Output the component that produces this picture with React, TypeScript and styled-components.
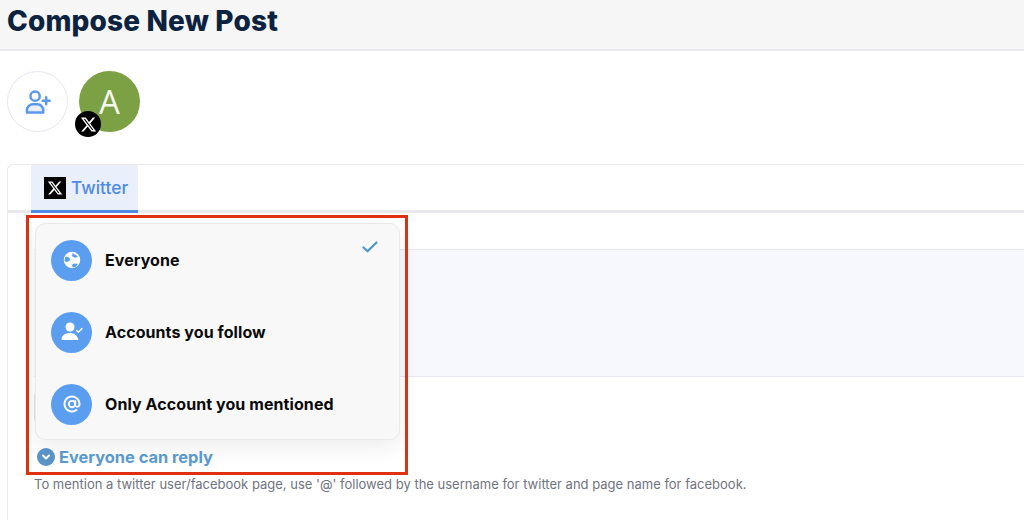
import React from "react";
import styled, { createGlobalStyle } from "styled-components";

const Global = createGlobalStyle`
  html, body { margin: 0; padding: 0; background: #fff; }
  body { width: 1024px; height: 520px; overflow: hidden; font-family: "Inter", "Liberation Sans", sans-serif; }
`;

const Page = styled.div`
  position: relative;
  width: 1024px;
  height: 520px;
  overflow: hidden;
  display: flex;
  flex-direction: column;
`;

const Header = styled.header`
  height: 51px;
  box-sizing: border-box;
  background: #f6f6f7;
  border-bottom: 2px solid #e9e9ef;
  padding: 5px 0 0 7px;
  flex: none;
`;

const Title = styled.h1`
  margin: 0;
  font-size: 28px;
  line-height: 32px;
  font-weight: 800;
  letter-spacing: 0.15px;
  color: #0c2340;
`;

const Accounts = styled.div`
  display: flex;
  gap: 11px;
  padding: 20px 0 0 7px;
  height: 113px;
  box-sizing: border-box;
  flex: none;
`;

const AddAccount = styled.div`
  width: 61px;
  height: 61px;
  box-sizing: border-box;
  border-radius: 50%;
  border: 1px solid #e6e7f0;
  display: flex;
  align-items: center;
  justify-content: center;
  color: #5b97ee;
`;

const Avatar = styled.div`
  position: relative;
  width: 61px;
  height: 61px;
  border-radius: 50%;
  background: #7ca145;
  color: #f4f7ee;
  font-size: 33px;
  font-family: "Open Sans", sans-serif;
  display: flex;
  align-items: center;
  justify-content: center;
`;

const NetworkBadge = styled.div`
  position: absolute;
  left: -4px;
  bottom: -5px;
  width: 26px;
  height: 26px;
  border-radius: 50%;
  background: #000;
  display: flex;
  align-items: center;
  justify-content: center;
`;

const Card = styled.section`
  position: relative;
  margin-left: 7px;
  flex: 1;
  border: 1px solid #e8e8ee;
  border-right: none;
  border-bottom: none;
  border-radius: 6px 0 0 0;
  box-sizing: border-box;
`;

const TabBar = styled.div`
  height: 48px;
  box-sizing: border-box;
  border-bottom: 3px solid #e9e9ed;
  padding-left: 23px;
  display: flex;
`;

const Tab = styled.div`
  height: 48px;
  box-sizing: border-box;
  padding: 0 10px 0 13px;
  background: #e9f0fc;
  border-bottom: 3px solid #4f8ae6;
  display: flex;
  align-items: center;
  gap: 5px;
  color: #4f8ae6;
  font-size: 17.4px;
  font-weight: 500;
`;

const XSquare = styled.div`
  width: 22px;
  height: 22px;
  background: #000;
  display: flex;
  align-items: center;
  justify-content: center;
`;

const Body = styled.div`
  padding: 36px 0 0 26px;
`;

const Editor = styled.div`
  height: 128px;
  box-sizing: border-box;
  background: #f6f8fd;
  border-top: 1px solid #e6e7ee;
  border-bottom: 1px solid #e6e7ee;
`;

const AttachButton = styled.div`
  width: 30px;
  height: 30px;
  margin-top: 14px;
  border: 1px solid #e4e4ea;
  border-radius: 4px;
`;

const ReplyRow = styled.div`
  display: flex;
  align-items: center;
  gap: 4px;
  margin: 24px 0 0 3px;
  color: #5b9bd0;
  font-size: 16.4px;
  line-height: 20px;
  font-weight: 700;
`;

const ReplyChevron = styled.span`
  width: 18px;
  height: 18px;
  border-radius: 50%;
  background: #5a95c8;
  display: flex;
  align-items: center;
  justify-content: center;
`;

const Hint = styled.p`
  margin: 8px 0 0;
  color: #6f7480;
  font-size: 13px;
  line-height: 18px;
`;

const Menu = styled.div`
  position: absolute;
  left: 27px;
  top: 58px;
  width: 365px;
  height: 217px;
  box-sizing: border-box;
  padding: 15px 15px 14px;
  border: 1px solid #e9e9ec;
  border-radius: 10px;
  background: #f8f8f9;
  box-shadow: 0 8px 22px rgba(0, 0, 0, 0.07);
  display: flex;
  flex-direction: column;
  justify-content: space-between;
`;

const MenuItem = styled.div`
  position: relative;
  display: flex;
  align-items: center;
  gap: 13px;
  height: 42px;
`;

const MenuIcon = styled.span`
  width: 41px;
  height: 41px;
  border-radius: 50%;
  background: #5b9ef0;
  display: flex;
  align-items: center;
  justify-content: center;
  flex: none;
`;

const MenuLabel = styled.span`
  font-size: 16px;
  font-weight: 700;
  letter-spacing: 0.08px;
  color: #0a0a0a;
`;

const Check = styled.span`
  position: absolute;
  right: 6px;
  top: 2px;
  color: #4f93cf;
  display: flex;
`;

const Highlight = styled.div`
  position: absolute;
  left: 26px;
  top: 215px;
  width: 382px;
  height: 260px;
  box-sizing: border-box;
  border: 3px solid #e0300f;
  pointer-events: none;
`;

const XGlyph = ({ size }: { size: number }) => (
  <svg width={size} height={size} viewBox="0 0 24 24" fill="#fff">
    <path d="M18.244 2.25h3.308l-7.227 8.26 8.502 11.24H16.17l-5.214-6.817L4.99 21.75H1.68l7.73-8.835L1.254 2.25H8.08l4.713 6.231zm-1.161 17.52h1.833L7.084 4.126H5.117z" />
  </svg>
);

export default function App() {
  return (
    <Page>
      <Global />
      <Header>
        <Title>Compose New Post</Title>
      </Header>
      <Accounts>
        <AddAccount>
          <svg width="28" height="28" viewBox="0 0 24 24" fill="none" stroke="currentColor" strokeWidth="2.1" strokeLinecap="round" strokeLinejoin="round">
            <circle cx="9.5" cy="7" r="4" />
            <path d="M2.5 21v-2a5 5 0 0 1 5-5h4a5 5 0 0 1 5 5v2z" fill="#e9f0fc" />
            <path d="M19 8v6M16 11h6" />
          </svg>
        </AddAccount>
        <Avatar>
          A
          <NetworkBadge>
            <XGlyph size={17} />
          </NetworkBadge>
        </Avatar>
      </Accounts>
      <Card>
        <TabBar>
          <Tab>
            <XSquare>
              <XGlyph size={16} />
            </XSquare>
            Twitter
          </Tab>
        </TabBar>
        <Body>
          <Editor />
          <AttachButton />
          <ReplyRow>
            <ReplyChevron>
              <svg width="12" height="12" viewBox="0 0 24 24" fill="none" stroke="#fff" strokeWidth="4" strokeLinecap="round" strokeLinejoin="round">
                <path d="M6 9l6 6 6-6" />
              </svg>
            </ReplyChevron>
            Everyone can reply
          </ReplyRow>
          <Hint>To mention a twitter user/facebook page, use '@' followed by the username for twitter and page name for facebook.</Hint>
        </Body>
        <Menu>
          <MenuItem>
            <MenuIcon>
              <svg width="18" height="18" viewBox="0 0 24 24">
                <circle cx="12" cy="12" r="11" fill="#fff" />
                <path d="M3 8c3-1 5 0 6 2s0 3-2 4-3 1-5-1zM13 2c1 2 2 3 4 3l3 3-4 1-4-2zM12 19c1-2 3-3 5-2l3 0-3 4-4 1z" fill="#5b9ef0" />
              </svg>
            </MenuIcon>
            <MenuLabel>Everyone</MenuLabel>
            <Check>
              <svg width="16" height="12" viewBox="0 0 16 12" fill="none" stroke="currentColor" strokeWidth="2.2" strokeLinecap="round" strokeLinejoin="round">
                <path d="M1.5 6.5l4 3.8L14.5 1.500" />
              </svg>
            </Check>
          </MenuItem>
          <MenuItem>
            <MenuIcon>
              <svg width="24" height="24" viewBox="0 0 24 24" fill="#fff">
                <circle cx="10" cy="7" r="4.5" />
                <path d="M1.5 20c0-4.500 3.500-7 8.500-7 2 0 4 .5 5 1.500 2 1.500 3 3 3.500 5.500z" />
                <path d="M16.500 10.500l1.800 1.800 3.700-3.800" fill="none" stroke="#fff" strokeWidth="1.4" strokeLinecap="round" strokeLinejoin="round" />
              </svg>
            </MenuIcon>
            <MenuLabel>Accounts you follow</MenuLabel>
          </MenuItem>
          <MenuItem>
            <MenuIcon>
              <svg width="18" height="18" viewBox="0 0 24 24" fill="none" stroke="#fff" strokeWidth="2.6" strokeLinecap="round" strokeLinejoin="round">
                <circle cx="12" cy="12" r="4.2" />
                <path d="M16.200 8v5.500a3 3 0 0 0 5.800 0V12a10 10 0 1 0-4 8" />
              </svg>
            </MenuIcon>
            <MenuLabel>Only Account you mentioned</MenuLabel>
          </MenuItem>
        </Menu>
      </Card>
      <Highlight />
    </Page>
  );
}
